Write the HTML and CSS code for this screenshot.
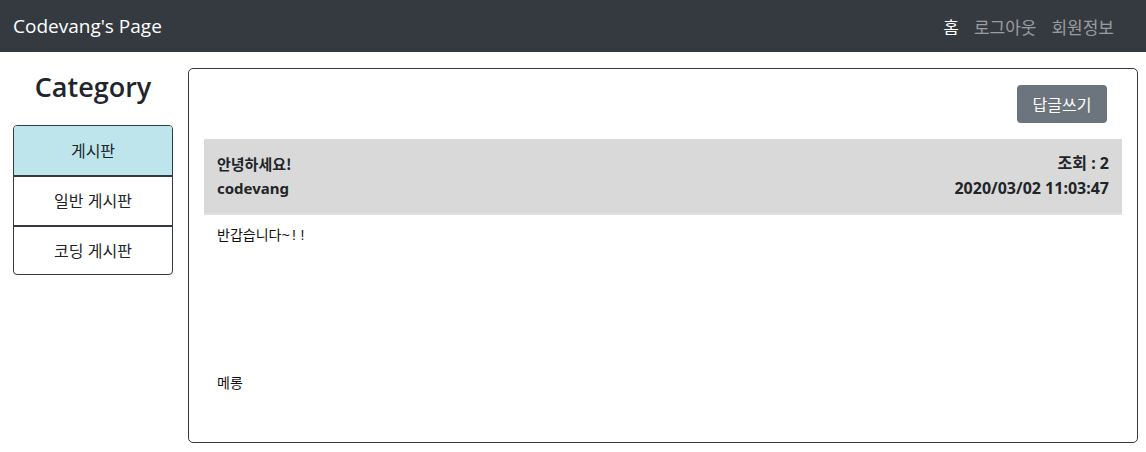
FILE: index.html
```html
<!DOCTYPE html>
<html lang="ko">
<head>
<meta charset="utf-8">
<link rel="stylesheet" href="styles.css">
</head>
<body>
<nav class="navbar">
  <a class="brand">Codevang's Page</a>
  <ul class="nav">
    <li class="nav-link active">홈</li>
    <li class="nav-link">로그아웃</li>
    <li class="nav-link">회원정보</li>
  </ul>
</nav>
<div class="layout">
  <aside class="sidebar">
    <h2 class="side-title">Category</h2>
    <ul class="list-group">
      <li class="list-item info">게시판</li>
      <li class="list-item">일반 게시판</li>
      <li class="list-item">코딩 게시판</li>
    </ul>
  </aside>
  <main class="card">
    <div class="toolbar">
      <button class="btn">답글쓰기</button>
    </div>
    <div class="post-head">
      <div class="row-line"><span class="title">안녕하세요!</span><span class="meta">조회 : 2</span></div>
      <div class="row-line"><span>codevang</span><span class="meta">2020/03/02 11:03:47</span></div>
    </div>
    <div class="post-body">반갑습니다~!!






메롱</div>
  </main>
</div>
</body>
</html>
```
FILE: styles.css
```css
* { box-sizing: border-box; }
body {
  margin: 0;
  font-family: "Noto Sans", "Noto Sans CJK KR", sans-serif;
  color: #212529;
  background: #fff;
}
.navbar {
  height: 52px;
  background: #343a40;
  display: flex;
  align-items: center;
  justify-content: space-between;
  padding: 0 32px 0 13px;
}
.brand {
  color: #fff;
  font-size: 19px;
  font-family: "Open Sans", "Noto Sans CJK KR", sans-serif;
}
.nav {
  list-style: none;
  margin: 0;
  padding: 0;
  display: flex;
  gap: 15px;
}
.nav-link {
  color: rgba(255,255,255,0.5);
  font-size: 17px;
  font-family: "Noto Sans CJK KR", sans-serif;
}
.nav-link.active { color: #fff; }
.layout {
  display: flex;
  padding: 16px 8px 0 13px;
  gap: 15px;
}
.sidebar {
  width: 160px;
  flex: none;
}
.side-title {
  margin: 0 0 19px;
  text-align: center;
  font-size: 27px;
  font-weight: 600;
  line-height: 38px;
  font-family: "Open Sans", sans-serif;
}
.list-group {
  list-style: none;
  margin: 0;
  padding: 0;
  border-radius: 4px;
  overflow: hidden;
  border: 1px solid #343a40;
}
.list-item {
  height: 50px;
  display: flex;
  align-items: center;
  justify-content: center;
  font-size: 16px;
  font-weight: 400;
  font-family: "Noto Sans CJK KR", sans-serif;
  color: #212529;
  border-top: 2px solid #343a40;
  padding-bottom: 2px;
}
.list-item:first-child { border-top: none; height: 49px; }
.list-item:last-child { height: 49px; }
.list-item.info { background: #bee5eb; }
.card {
  flex: 1;
  height: 375px;
  border: 1px solid #343a40;
  border-radius: 5px;
  padding: 16px 15px;
}
.toolbar {
  display: flex;
  justify-content: flex-end;
  padding-right: 15px;
  margin-bottom: 16px;
}
.btn {
  background: #6c757d;
  color: #fff;
  border: none;
  border-radius: 4px;
  height: 38px;
  width: 90px;
  font-size: 16px;
  font-family: "Noto Sans CJK KR", sans-serif;
}
.post-head {
  background: #d9d9d9;
  border-bottom: 2px solid #dee2e6;
  padding: 12px 13px 12px 13px;
  font-weight: 700;
  font-size: 15px;
  font-family: "Noto Sans", "Noto Sans CJK KR", sans-serif;
}
.row-line {
  display: flex;
  justify-content: space-between;
  line-height: 25px;
}
.title { font-family: "Noto Sans CJK KR", sans-serif; }
.meta { font-size: 16px; }
.post-body {
  white-space: pre-line;
  padding: 11px 13px;
  font-size: 14px;
  line-height: 21.2px;
  color: #111;
  font-family: "Liberation Mono", "Noto Sans CJK KR", monospace;
}
```
